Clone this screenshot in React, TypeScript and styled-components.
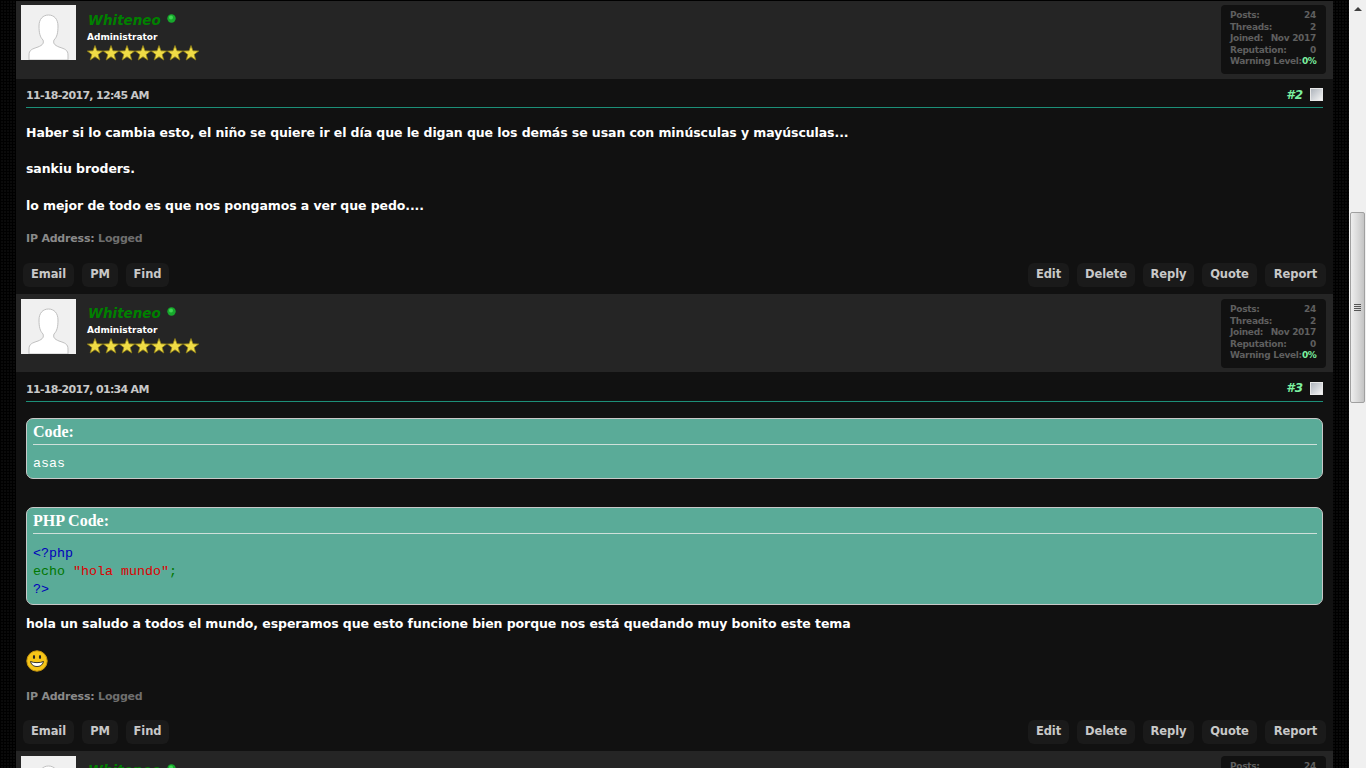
import React from "react";
import styled, { createGlobalStyle } from "styled-components";

const Global = createGlobalStyle`
  html, body { margin: 0; padding: 0; height: 768px; overflow: hidden; background: #000; }
  * { box-sizing: border-box; }
`;

const Page = styled.div`
  display: flex;
  width: 1366px;
  height: 768px;
  overflow: hidden;
  font-family: "DejaVu Sans", sans-serif;
`;
const Backdrop = styled.div`
  flex: 1;
  min-width: 0;
  padding: 1px 16px 0;
  background-color: #0a0a0a;
  background-image: linear-gradient(#000 1px, transparent 1px), linear-gradient(90deg, #000 1px, transparent 1px);
  background-size: 3px 3px;
`;
const Column = styled.main`
  display: flex;
  flex-direction: column;
  background: #111;
`;
const Scrollbar = styled.aside`
  flex: 0 0 17px;
  display: flex;
  flex-direction: column;
  padding-top: 212px;
  position: relative;
  background: #f0f0f0;
`;
const ScrollArrow = styled.span`
  position: absolute;
  top: 7px;
  left: 5px;
  border: 4px solid transparent;
  border-top: 0;
  border-bottom: 4px solid #404040;
`;
const ScrollThumb = styled.div`
  height: 191px;
  margin: 0 1px;
  border: 1px solid #a0a0a0;
  border-radius: 2px;
  background: linear-gradient(90deg, #eee, #d8d8d8 55%, #c4c4c4);
  display: flex;
  flex-direction: column;
  justify-content: center;
  align-items: center;
  gap: 1px;
`;
const Grip = styled.i`
  display: block;
  width: 7px;
  height: 1px;
  background: #555;
`;

const AuthorBar = styled.header`
  display: flex;
  justify-content: space-between;
  height: 78px;
  flex: none;
  padding: 4px 7px 0 5px;
  background: #252525;
`;
const AuthorLeft = styled.div`
  display: flex;
  align-items: flex-start;
  gap: 11px;
`;
const Avatar = styled.svg<{ $nudge: number }>`
  display: block;
  width: 55px;
  height: 55px;
  margin-top: ${(p) => p.$nudge}px;
`;
const AuthorInfo = styled.div`
  display: flex;
  flex-direction: column;
`;
const NameRow = styled.div`
  display: flex;
  align-items: center;
  gap: 6px;
  height: 22px;
  margin: 4px 0 0 1px;
`;
const Name = styled.span`
  color: #008000;
  font-size: 13.5px;
  font-weight: 700;
  font-style: italic;
`;
const OnlineDot = styled.svg`
  display: block;
  width: 9px;
  height: 9px;
  margin-bottom: 4px;
`;
const Role = styled.div`
  color: #fff;
  font-size: 9px;
  font-weight: 700;
  line-height: 12px;
`;
const Stars = styled.div`
  display: flex;
  margin-top: 2px;
`;
const StatsBox = styled.dl<{ $nudge: number }>`
  width: 105px;
  height: 69px;
  margin: ${(p) => p.$nudge}px 0 0;
  padding: 5px 10px 0 9px;
  background: #111;
  border-radius: 4px;
  font-size: 9px;
  font-weight: 700;
  line-height: 11.6px;
  letter-spacing: -0.3px;
  white-space: nowrap;
  color: #5f5f5f;
`;
const StatRow = styled.div`
  display: flex;
  justify-content: space-between;
`;
const StatValue = styled.span<{ $good?: boolean }>`
  color: ${(p) => (p.$good ? "#7cf0a0" : "#5f5f5f")};
`;

const PostBody = styled.section<{ $height: number }>`
  height: ${(p) => p.$height}px;
  flex: none;
  display: flex;
  flex-direction: column;
  padding: 0 7px 7px 7px;
`;
const Meta = styled.div<{ $height: number }>`
  display: flex;
  justify-content: space-between;
  align-items: center;
  height: ${(p) => p.$height}px;
  padding-top: 3px;
  margin: 0 3px;
  border-bottom: 1px solid #1c8f78;
  font-size: 11px;
  font-weight: 700;
  letter-spacing: -0.7px;
  color: #c8c8c8;
`;
const MetaDate = styled.span`
  padding-top: 2px;
`;
const MetaRight = styled.div`
  display: flex;
  align-items: center;
  gap: 7px;
`;
const PostNumber = styled.a`
  color: #7cf0a0;
  font-size: 12px;
  letter-spacing: 0;
  font-style: italic;
  font-weight: 700;
`;
const Check = styled.span`
  width: 13px;
  height: 13px;
  border: 1px solid #e8e8e8;
  background: linear-gradient(135deg, #aeb4bc, #f4f4f4);
`;
const Content = styled.div`
  margin: 0 3px;
  color: #fff;
  font-size: 12.5px;
  letter-spacing: -0.08px;
  font-weight: 700;
`;
const Para = styled.p<{ $top: number }>`
  margin: ${(p) => p.$top}px 0 0;
  line-height: 18px;
`;
const CodeBox = styled.div<{ $top: number }>`
  margin-top: ${(p) => p.$top}px;
  padding: 0 5px 0 6px;
  background: #5aab98;
  border: 1px solid #c8c8c8;
  border-radius: 7px;
`;
const CodeTitle = styled.div`
  height: 26px;
  padding-top: 4px;
  border-bottom: 1px solid #cfe0da;
  font-family: "Liberation Serif", serif;
  font-size: 16px;
  font-weight: 700;
  letter-spacing: 0;
  line-height: 17px;
  color: #fff;
`;
const CodeText = styled.pre<{ $top: number }>`
  margin: ${(p) => p.$top}px 0 5px;
  font-family: "Liberation Mono", monospace;
  font-size: 13.33px;
  font-weight: 400;
  letter-spacing: 0;
  line-height: 18px;
  color: #fff;
`;
const PhpBlue = styled.span`color: #0000bb;`;
const PhpGreen = styled.span`color: #007700;`;
const PhpRed = styled.span`color: #dd0000;`;
const Smile = styled.svg`
  display: block;
  width: 22px;
  height: 22px;
  margin-top: 17px;
`;
const IpLine = styled.div<{ $top: number }>`
  margin: ${(p) => p.$top}px 3px 0;
  font-size: 11px;
  font-weight: 700;
  letter-spacing: -0.2px;
  line-height: 14px;
  color: #6e6e6e;
`;
const IpLabel = styled.span`color: #8a8a8a;`;
const Buttons = styled.nav`
  display: flex;
  justify-content: space-between;
  margin-top: auto;
`;
const ButtonGroup = styled.div`
  display: flex;
  gap: 8px;
`;
const ActionButton = styled.a<{ $width: number }>`
  display: flex;
  justify-content: center;
  align-items: center;
  width: ${(p) => p.$width}px;
  height: 24px;
  padding-bottom: 2px;
  border-radius: 6px;
  background: #1a1a1a;
  color: #c8c8c8;
  font-size: 11.5px;
  font-weight: 700;
  letter-spacing: -0.1px;
`;

const AvatarArt = ({ nudge }: { nudge: number }) => (
  <Avatar $nudge={nudge} viewBox="0 0 55 55">
    <rect width="55" height="55" fill="#f0f0f0" />
    <path
      d="M8 55 V50 C8 45 11 44 17 42 C22 40 23 38 22 35 C19 32 18 28 18 21 C18 14 22 10 27.5 10 C33 10 37 14 37 21 C37 28 36 32 33 35 C32 38 33 40 38 42 C44 44 47 45 47 50 V55 Z"
      fill="#fff"
      stroke="#c0c0c0"
      strokeWidth="1"
    />
  </Avatar>
);

const Star = () => (
  <svg width="16" height="16" viewBox="0 0 16 16">
    <path
      d="M8 0.5 L10 5.8 L15.7 6 L11.2 9.5 L12.8 15 L8 11.8 L3.2 15 L4.8 9.5 L0.3 6 L6 5.8 Z"
      fill="#f0dc46"
      stroke="#8f7f16"
      strokeWidth="0.8"
    />
  </svg>
);

const Dot = () => (
  <OnlineDot viewBox="0 0 9 9">
    <circle cx="4.5" cy="4.5" r="4.2" fill="#17a82c" />
    <circle cx="4" cy="3.6" r="2" fill="#3fd652" />
  </OnlineDot>
);

const Author = ({ nudge = 1 }: { nudge?: number }) => (
  <AuthorBar>
    <AuthorLeft>
      <AvatarArt nudge={nudge} />
      <AuthorInfo>
        <NameRow>
          <Name>Whiteneo</Name>
          <Dot />
        </NameRow>
        <Role>Administrator</Role>
        <Stars>
          {Array.from({ length: 7 }, (_, i) => (
            <Star key={i} />
          ))}
        </Stars>
      </AuthorInfo>
    </AuthorLeft>
    <StatsBox $nudge={nudge}>
      <StatRow><span>Posts:</span><StatValue>24</StatValue></StatRow>
      <StatRow><span>Threads:</span><StatValue>2</StatValue></StatRow>
      <StatRow><span>Joined:</span><StatValue>Nov 2017</StatValue></StatRow>
      <StatRow><span>Reputation:</span><StatValue>0</StatValue></StatRow>
      <StatRow><span>Warning Level:</span><StatValue $good>0%</StatValue></StatRow>
    </StatsBox>
  </AuthorBar>
);

const left: [string, number][] = [["Email", 51], ["PM", 36], ["Find", 43]];
const right: [string, number][] = [["Edit", 41], ["Delete", 58], ["Reply", 51], ["Quote", 55], ["Report", 61]];

const Actions = () => (
  <Buttons>
    <ButtonGroup>{left.map(([t, w]) => <ActionButton key={t} $width={w}>{t}</ActionButton>)}</ButtonGroup>
    <ButtonGroup>{right.map(([t, w]) => <ActionButton key={t} $width={w}>{t}</ActionButton>)}</ButtonGroup>
  </Buttons>
);

const PostMeta = ({ date, num, height }: { date: string; num: string; height: number }) => (
  <Meta $height={height}>
    <MetaDate>{date}</MetaDate>
    <MetaRight>
      <PostNumber>{num}</PostNumber>
      <Check />
    </MetaRight>
  </Meta>
);

const Ip = ({ top }: { top: number }) => (
  <IpLine $top={top}><IpLabel>IP Address:</IpLabel> Logged</IpLine>
);

export default function App() {
  return (
    <Page>
      <Global />
      <Backdrop>
        <Column>
          <Author nudge={0} />
          <PostBody $height={215}>
            <PostMeta date="11-18-2017, 12:45 AM" num="#2" height={29} />
            <Content>
              <Para $top={16}>Haber si lo cambia esto, el niño se quiere ir el día que le digan que los demás se usan con minúsculas y mayúsculas...</Para>
              <Para $top={18}>sankiu broders.</Para>
              <Para $top={19}>lo mejor de todo es que nos pongamos a ver que pedo....</Para>
            </Content>
            <Ip top={17} />
            <Actions />
          </PostBody>
          <Author />
          <PostBody $height={379}>
            <PostMeta date="11-18-2017, 01:34 AM" num="#3" height={30} />
            <Content>
              <CodeBox $top={16}>
                <CodeTitle>Code:</CodeTitle>
                <CodeText $top={10}>asas</CodeText>
              </CodeBox>
              <CodeBox $top={28}>
                <CodeTitle>PHP Code:</CodeTitle>
                <CodeText $top={11}>
                  <PhpBlue>&lt;?php</PhpBlue>{"\n"}
                  <PhpGreen>echo </PhpGreen><PhpRed>"hola mundo"</PhpRed><PhpGreen>;</PhpGreen>{"\n"}
                  <PhpBlue>?&gt;</PhpBlue>
                </CodeText>
              </CodeBox>
              <Para $top={10}>hola un saludo a todos el mundo, esperamos que esto funcione bien porque nos está quedando muy bonito este tema</Para>
              <Smile viewBox="0 0 22 22">
                <circle cx="11" cy="11" r="10.2" fill="#f5c518" stroke="#c9980f" />
                <ellipse cx="8" cy="7" rx="1.1" ry="2" fill="#222" />
                <ellipse cx="14" cy="7" rx="1.1" ry="2" fill="#222" />
                <path d="M4.5 11.5 C7.5 13 14.5 13 17.5 11.5 C16.5 15.5 13.5 16.5 11 16.5 C8.5 16.5 5.5 15.5 4.5 11.5 Z" fill="#fff" stroke="#222" strokeWidth="0.9" />
              </Smile>
            </Content>
            <Ip top={18} />
            <Actions />
          </PostBody>
          <Author />
        </Column>
      </Backdrop>
      <Scrollbar>
        <ScrollArrow />
        <ScrollThumb>
          <Grip /><Grip /><Grip /><Grip />
        </ScrollThumb>
      </Scrollbar>
    </Page>
  );
}
